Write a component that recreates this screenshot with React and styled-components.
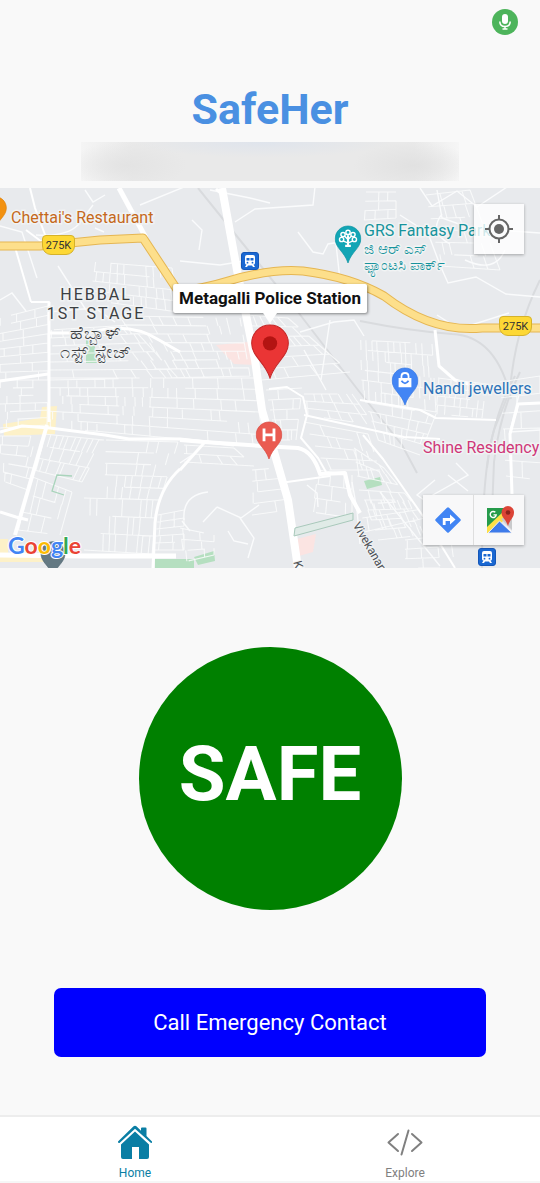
import React from "react";
import styled, { createGlobalStyle } from "styled-components";

const Global = createGlobalStyle`
  * { box-sizing: border-box; }
  html, body, #root { margin: 0; min-height: 100%; }
  body { background: #f9f9f9; font-family: Roboto, "Noto Sans", "Liberation Sans", sans-serif; }
  button { font-family: inherit; border: 0; padding: 0; cursor: pointer; }
`;

const Screen = styled.div`
  display: flex;
  flex-direction: column;
  min-height: 100vh;
`;

const StatusBar = styled.div`
  display: flex;
  justify-content: flex-end;
  padding: 9px 22px 0 0;
  height: 84px;
`;

const MicBadge = styled.span`
  display: flex;
  align-items: center;
  justify-content: center;
  width: 26px;
  height: 26px;
  border-radius: 50%;
  background: #4db45b;
`;

const Title = styled.h1`
  margin: 0;
  text-align: center;
  font-size: 43px;
  line-height: 50px;
  font-weight: 700;
  color: #4a90e2;
`;

const Redacted = styled.div`
  width: 70%;
  height: 39px;
  margin: 8px auto 7px;
  background:
    radial-gradient(ellipse 34% 40% at 48% 0, #dfe4ec, transparent),
    radial-gradient(ellipse 16% 60% at 88% 60%, #e1e1e1, transparent),
    radial-gradient(ellipse 16% 60% at 12% 60%, #e3e3e3, transparent),
    linear-gradient(90deg, #f5f5f5, #e9e9e9 14%, #e9e9e9 88%, #f6f6f6);
`;

/* The drawing, the places and the controls are layers in one grid cell. */
const MapArea = styled.section`
  display: grid;
  width: 100%;
  aspect-ratio: 540 / 380;
  overflow: hidden;
  background: #e8eaed;

  > * { grid-area: 1 / 1; }
`;

const MapDrawing = styled.svg`
  display: block;
  width: 100%;
  height: 100%;
`;

const Places = styled.div`
  position: relative;
`;

const Spot = styled.div`
  position: absolute;
  left: ${(p) => (p.$x / 540) * 100}%;
  top: ${(p) => ((p.$y - 188) / 380) * 100}%;
`;

const PlaceName = styled(Spot)`
  color: ${(p) => p.$color};
  font-size: 16px;
  line-height: 20px;
  white-space: nowrap;
  -webkit-text-stroke: 3px #f1f3f4;
  paint-order: stroke fill;
`;

const LocalName = styled.span`
  display: block;
  font-size: 15px;
  line-height: 16px;
`;

const District = styled(Spot)`
  width: 120px;
  text-align: center;
  color: #3c4043;
  font-size: 16px;
  line-height: 19px;
  letter-spacing: 2px;
  -webkit-text-stroke: 3px #f1f3f4;
  paint-order: stroke fill;
`;

const DistrictLocal = styled.span`
  display: block;
  font-size: 18px;
  letter-spacing: 1px;
`;

const RoadShield = styled(Spot)`
  width: 33px;
  height: 20px;
  border: 1px solid #d5b22a;
  border-radius: 4px 4px 9px 9px;
  background: #fdd835;
  color: #333;
  font-size: 11px;
  line-height: 19px;
  text-align: center;
`;

const RoadName = styled(Spot)`
  transform: rotate(${(p) => p.$turn}deg);
  transform-origin: 0 50%;
  color: #4d5156;
  font-size: 12px;
  line-height: 14px;
  white-space: nowrap;
  -webkit-text-stroke: 2px #f1f3f4;
  paint-order: stroke fill;
`;

const Callout = styled(Spot)`
  transform: translateX(-50%);
  padding: 0 6px;
  background: #fff;
  border-radius: 2px;
  box-shadow: 0 1px 3px rgba(0, 0, 0, 0.45);
  color: #111;
  font-size: 17px;
  font-weight: 700;
  line-height: 29px;
  white-space: nowrap;

  &::after {
    content: "";
    position: absolute;
    left: 50%;
    top: 100%;
    margin-left: -7px;
    border: 7px solid transparent;
    border-top: 10px solid #fff;
    border-bottom: 0;
  }
`;

const Controls = styled.div`
  display: flex;
  flex-direction: column;
  justify-content: space-between;
  padding: 16px 16px 7px 8px;
  z-index: 1;
`;

const MapButton = styled.button`
  display: flex;
  align-items: center;
  justify-content: center;
  width: 50px;
  height: 50px;
  background: ${(p) => (p.$solid ? "#f8f8f9" : "rgba(255, 255, 255, 0.8)")};
`;

const LocateButton = styled(MapButton)`
  align-self: flex-end;
  box-shadow: 0 1px 3px rgba(0, 0, 0, 0.3);
`;

const ControlRow = styled.div`
  display: flex;
  justify-content: space-between;
  align-items: flex-end;
`;

const MapTools = styled.div`
  display: flex;
  gap: 1px;
  margin-bottom: 16px;
  background: #dedede;
  box-shadow: 0 1px 3px rgba(0, 0, 0, 0.3);
`;

const GoogleMark = styled.div`
  font-family: Lato, sans-serif;
  font-size: 23px;
  font-weight: 700;
  line-height: 32px;
  -webkit-text-stroke: 2px #fff;
  paint-order: stroke fill;
`;

const Letter = styled.span`
  color: ${(p) => p.$color};
`;

const Actions = styled.main`
  flex: 1;
  display: flex;
  flex-direction: column;
  align-items: center;
  gap: 78px;
  padding: 79px 10% 58px;
`;

const SafeButton = styled.button`
  width: 263px;
  height: 263px;
  padding-bottom: 9px;
  border-radius: 50%;
  background: #008000;
  color: #fff;
  font-size: 76px;
  line-height: 88px;
  font-weight: 700;
`;

const CallButton = styled.button`
  width: 100%;
  height: 69px;
  border-radius: 7px;
  background: #0000ff;
  color: #fff;
  font-size: 22px;
  line-height: 28px;
`;

const TabBar = styled.nav`
  display: flex;
  height: 68px;
  background: #fff;
  border-top: 2px solid #ededed;
  border-bottom: 2px solid #f6f6f6;
`;

const Tab = styled.a`
  flex: 1;
  display: flex;
  flex-direction: column;
  align-items: center;
  gap: 6px;
  padding-top: 7px;
  color: ${(p) => (p.$active ? "#0a7ea4" : "#808080")};
  font-size: 12px;
  line-height: 14px;
  text-decoration: none;
`;

/* Street grid inside a quadrilateral: a, b, c, d run clockwise from top left. */
function grid(a, b, c, d, rows, cols, seed = 1) {
  const mix = (p, q, t) => [p[0] + (q[0] - p[0]) * t, p[1] + (q[1] - p[1]) * t];
  const at = (u, v) => mix(mix(a, b, u), mix(d, c, u), v).map((n) => n.toFixed(1)).join(" ");
  const rand = (n) => {
    const s = Math.sin(n * 12.9898 + seed * 78.233) * 43758.5453;
    return s - Math.floor(s);
  };
  let path = "";
  for (let i = 0; i <= rows; i++) {
    const start = rand(i) < 0.3 ? rand(i + 7) * 0.4 : 0;
    path += `M${at(start, i / rows)}L${at(rand(i + 3) < 0.3 ? 0.7 : 1, i / rows)}`;
  }
  for (let r = 0; r < rows; r++) {
    for (let k = 0; k <= cols; k++) {
      if (rand(r * 31 + k) < 0.62) {
        const u = Math.min(1, (k + rand(r * 5 + k) * 0.5) / cols);
        path += `M${at(u, r / rows)}L${at(u, (r + 1) / rows)}`;
      }
    }
  }
  return path;
}

const STREETS = [
  grid([95, 262], [172, 268], [178, 312], [90, 300], 4, 11, 1),
  grid([0, 318], [48, 306], [48, 380], [0, 380], 8, 3, 2),
  grid([50, 330], [130, 325], [178, 378], [50, 378], 6, 8, 3),
  grid([118, 316], [240, 318], [250, 376], [160, 378], 7, 9, 4),
  grid([0, 380], [48, 380], [47, 425], [0, 428], 6, 3, 5),
  grid([50, 380], [148, 378], [150, 436], [50, 427], 6, 11, 6),
  grid([150, 378], [254, 378], [264, 446], [148, 436], 6, 8, 7),
  grid([0, 436], [44, 436], [28, 490], [0, 480], 5, 3, 8),
  grid([44, 434], [104, 440], [82, 482], [34, 470], 3, 10, 9),
  grid([106, 440], [178, 442], [160, 500], [104, 498], 5, 7, 10),
  grid([84, 498], [158, 500], [152, 554], [84, 550], 3, 12, 11),
  grid([30, 476], [72, 492], [60, 535], [18, 530], 3, 6, 12),
  grid([158, 515], [184, 510], [184, 550], [154, 550], 5, 2, 14),
  grid([252, 470], [276, 468], [288, 510], [252, 515], 4, 2, 15),
  grid([246, 315], [288, 318], [350, 372], [262, 380], 6, 7, 16),
  grid([266, 390], [302, 388], [296, 440], [276, 440], 5, 4, 17),
  grid([304, 394], [352, 394], [374, 425], [304, 415], 3, 6, 18),
  grid([304, 422], [368, 434], [380, 470], [326, 470], 4, 5, 19),
  grid([360, 340], [432, 344], [436, 412], [362, 400], 6, 13, 20),
  grid([365, 402], [436, 414], [420, 455], [378, 440], 4, 8, 21),
  grid([438, 378], [486, 384], [482, 418], [436, 414], 4, 8, 22),
  grid([354, 448], [384, 468], [425, 518], [364, 532], 6, 5, 23),
  grid([364, 500], [408, 500], [424, 535], [378, 540], 4, 8, 24),
  grid([405, 540], [450, 535], [455, 568], [405, 568], 3, 3, 25),
  grid([318, 470], [352, 475], [352, 518], [312, 512], 3, 3, 26),
  grid([366, 192], [396, 192], [396, 218], [364, 220], 3, 3, 27),
  grid([426, 195], [470, 190], [500, 270], [440, 266], 6, 4, 28),
  grid([500, 382], [540, 376], [540, 480], [506, 476], 6, 1, 29),
  grid([180, 528], [214, 535], [214, 555], [184, 562], 3, 2, 30),
  grid([184, 445], [234, 448], [254, 466], [184, 462], 2, 4, 31),
].join("");

const HIGHWAY = "M0 246l40 0 60-6 43-2 35 53q24-2 50-10 45-13 75-10 48 6 81 25 48 37 98 32h60l38-10";

function MapBackground() {
  return (
    <MapDrawing viewBox="0 188 540 380" preserveAspectRatio="xMidYMid slice" aria-hidden="true">
      <g fill="#fbe4e2">
        <path d="M216 345l32-3 7 23-21-1z" />
        <path d="M297 539l19-5-3 18-14 4z" />
      </g>
      <g fill="#fdf1c8">
        <path d="M3 424l37-6 2-11 15-1-2 28-51 2z" />
        <path d="M0 553h44v9H0zM0 539h8v14H0z" />
      </g>
      <g fill="#b5dfc0">
        <path d="M86 339h8l3 24H86zM364 481l16-4 2 8-15 4zM155 559h39v9h-39zM194 557l20-6 1 10-17 4z" />
      </g>
      <g fill="none" stroke="#d9dbde" strokeWidth="2">
        <path d="M198 188l50 62 50 62 60 78 44 55 15 28" />
        <path d="M360 321q50 10 92 13 45 2 59 65M540 280q-25 50-30 110l-16 40q-12 40-12 138" />
        <path d="M520 372q-20 40-26 90l-2 50M515 376q-22 40-28 92" />
      </g>
      <path d={STREETS} fill="none" stroke="#fafbfc" strokeWidth="1.1" opacity="0.85" />
      <g fill="none" stroke="#fafbfc" strokeWidth="1.4">
        <path d="M0 226l22 6 15 46M58 266l28 44M36 235q30 2 42-10l15-20M85 190l8 12 12-7M95 228l9 4M140 205l44-18M0 300l12-7 14 18M48 312l47-4 20 14" />
        <path d="M192 220l10 10-3 20M210 190l40 8 20 5M235 222l20-13 58-4 2-18M298 232l15 20 10 2 5-10 30-5M335 235l5 45M180 261l40 4 30-5" />
        <path d="M437 190l5 28 28 10 70 5M400 215l28 18 12 32 8 18 28-6 30 17 34 3M420 188l12 18 25-15 20 16 30-20M450 244q-22-12-8-30M465 260q30 14 40-10" />
        <path d="M437 315l22 14 50-16M304 350l22 40M300 332l34-10 20-2 10 16M330 320l-9 60M520 390l-10 42 30-2M435 480l-18 15 7 5 44-25-12-12M448 475l20 16" />
        <path d="M180 463l12-8M184 520q-2-25 24-28M182 521l8 10M217 507l24 11 18-13M217 507l-14 15M240 518l14 20-6 20M228 531l6 10 14 3" />
        <path d="M307 485l10 8 1 14M352 482l5 28 3 34M380 492l60 74" />
      </g>
      <g fill="none" stroke="#fff" strokeLinejoin="round">
        <path d="M30 188l5 20 15 40-24-18M15 247l16 55M31 302h18v73" strokeWidth="2" />
        <path d="M49 302v120" strokeWidth="3" />
        <path d="M0 432l22-6 28 2 55 7 24 4h51l54 6" strokeWidth="3" />
        <path d="M47 425l-32 110" strokeWidth="4" />
        <path d="M0 512l16 5 12 3M49 333h40q40-12 70 7l21 12M0 381l48-7" strokeWidth="3" />
        <path d="M119 188l27 50" strokeWidth="5" />
        <path d="M0 555l86 1h90" strokeWidth="5" />
        <path d="M180 469q-22 20-25 54l-2 45M180 470l24-27" strokeWidth="3" />
        <path d="M222 188l15 82 18 90 7 50 26 90 10 68" strokeWidth="8" />
        <path d="M216 189l10 9" strokeWidth="3" />
        <path d="M180 440l24 2 58 4 36 2q15 3 22 26l25-1 5 22 10 18" strokeWidth="4" />
        <path d="M280 483l50-7M326 472l-8-14-17-20 6-23-4-18-16-10-18 2" strokeWidth="2" />
        <path d="M304 415l100 22 36 2M360 400l60 10 16 8 60 2M363 435l20 24 42 60 30 49" strokeWidth="2" />
        <path d="M435 330l4 36 16 14 20 6" strokeWidth="3" />
        <path d="M540 403l-22 1-8 30 2 60" strokeWidth="3" />
      </g>
      <path d="M295 528l58-15v7l-59 16z" fill="#e0ebe7" stroke="#a9c9bb" />
      <path d="M72 476l-15-1-5 16 12 4" fill="none" stroke="#a9d4bb" strokeWidth="1.3" />
      <g fill="none" strokeLinejoin="round">
        <path d={HIGHWAY} stroke="#e5b653" strokeWidth="9" />
        <path d={HIGHWAY} stroke="#fddf8b" strokeWidth="7" />
      </g>
    </MapDrawing>
  );
}

const PinShape = styled.svg`
  display: block;
  transform: translate(-50%, -100%);
`;

function Pin({ x, y, width, height, color, edge, children }) {
  return (
    <Spot $x={x} $y={y}>
      <PinShape width={width} height={height} viewBox="0 0 38 54" aria-hidden="true">
        <path d="M19 1C9 1 1 9 1 19c0 13 13 18 18 34 5-16 18-21 18-34C37 9 29 1 19 1z" fill={color} stroke={edge} />
        {children}
      </PinShape>
    </Spot>
  );
}

const Station = ({ x, y }) => (
  <Spot $x={x} $y={y}>
    <svg width="18" height="18" viewBox="0 0 18 18" aria-hidden="true">
      <rect x="0.5" y="0.5" width="17" height="17" rx="2.5" fill="#1a68d2" stroke="#1456b8" />
      <path d="M6 3h6q2 0 2 2v6q0 1.500-1.500 1.500L14 15h-2l-1-1.500H7L6 15H4l1.500-2.500Q4 12.500 4 11V5q0-2 2-2z" fill="#fff" />
      <path d="M5.500 6H8.500v2.500h-3zM9.500 6h3v2.500h-3z" fill="#1a68d2" />
      <circle cx="6.500" cy="10.700" r="0.900" fill="#1a68d2" />
      <circle cx="11.500" cy="10.700" r="0.900" fill="#1a68d2" />
    </svg>
  </Spot>
);

const GOOGLE = [["G", "#4285f4"], ["o", "#ea4335"], ["o", "#fbbc04"], ["g", "#4285f4"], ["l", "#34a853"], ["e", "#ea4335"]];

function MapPlaces() {
  return (
    <Places>
      <Pin x={-5} y={230} width={26} height={34} color="#f29111" edge="#dd7c00" />
      <PlaceName $x={11} $y={208} $color="#c5691c">Chettai's Restaurant</PlaceName>
      <RoadShield $x={42} $y={235}>275K</RoadShield>
      <RoadShield $x={499} $y={316}>275K</RoadShield>
      <District $x={36} $y={285}>
        HEBBAL<br />1ST STAGE
        <DistrictLocal>ಹೆಬ್ಬಾಳ್</DistrictLocal>
        <DistrictLocal>೧ಸ್ಟ್ ಸ್ಟೇಜ್</DistrictLocal>
      </District>
      <Station x={241} y={252} />
      <Station x={478} y={548} />
      <Pin x={348} y={264} width={27} height={39} color="#12a5b5" edge="#0c93a2">
        <g fill="none" stroke="#fff" strokeWidth="2">
          <circle cx="19" cy="10" r="3" />
          <circle cx="12" cy="13" r="3" />
          <circle cx="26" cy="13" r="3" />
          <circle cx="10" cy="20" r="3" />
          <circle cx="28" cy="20" r="3" />
          <path d="M12 22l7 3 7-3M14 15l5 5 5-5" />
          <path d="M19 14v15M15 29h8" strokeWidth="3" />
        </g>
      </Pin>
      <PlaceName $x={364} $y={221} $color="#17939c">
        GRS Fantasy Park
        <LocalName>ಜಿ ಆರ್ ಎಸ್</LocalName>
        <LocalName>ಫ್ಯಾಂಟಸಿ ಪಾರ್ಕ್</LocalName>
      </PlaceName>
      <Pin x={405} y={406} width={27} height={39} color="#4285f4" edge="#3577e4">
        <path d="M10 15h18v13H10z" fill="#fff" />
        <path d="M14 16v-3q0-5 5-5t5 5v3" fill="none" stroke="#fff" strokeWidth="2.500" />
        <path d="M14 19q5 7 10 0" fill="none" stroke="#4285f4" strokeWidth="2.500" />
      </Pin>
      <PlaceName $x={423} $y={379} $color="#2d73b9">Nandi jewellers</PlaceName>
      <PlaceName $x={423} $y={438} $color="#cf3779">Shine Residency</PlaceName>
      <Pin x={269} y={460} width={27} height={39} color="#ea5b51" edge="#d94a41">
        <path d="M12 10v18M26 10v18M12 19h14" fill="none" stroke="#fff" strokeWidth="4" />
      </Pin>
      <Pin x={270} y={379} width={39} height={55} color="#ea3535" edge="#c52828">
        <circle cx="19" cy="19" r="7" fill="#b31412" />
      </Pin>
      <Callout $x={270} $y={284}>Metagalli Police Station</Callout>
      <Pin x={53} y={577} width={27} height={36} color="#647983" edge="#566b75" />
      <RoadName $x={356} $y={516} $turn={60}>Vivekanan</RoadName>
      <RoadName $x={297} $y={554} $turn={75}>K</RoadName>
    </Places>
  );
}

function MapControls() {
  return (
    <Controls>
      <LocateButton aria-label="My location">
        <svg width="28" height="28" viewBox="0 0 28 28">
          <circle cx="14" cy="14" r="9.500" fill="none" stroke="#666" strokeWidth="2" />
          <circle cx="14" cy="14" r="5" fill="#666" />
          <path d="M14 0v5M14 23v5M0 14h5M23 14h5" stroke="#666" strokeWidth="2" />
        </svg>
      </LocateButton>
      <ControlRow>
        <GoogleMark>
          {GOOGLE.map(([letter, color], i) => (
            <Letter key={i} $color={color}>{letter}</Letter>
          ))}
        </GoogleMark>
        <MapTools>
          <MapButton $solid aria-label="Directions">
            <svg width="26" height="26" viewBox="0 0 26 26">
              <path d="M12 .7q1-1 2 0L25.300 12q1 1 0 2L14 25.300q-1 1-2 0L.7 14q-1-1 0-2z" fill="#4285f4" />
              <path d="M9.200 18v-5.500h7" fill="none" stroke="#fff" strokeWidth="2.800" />
              <path d="M15 7.500l5.500 5-5.500 5z" fill="#fff" />
            </svg>
          </MapButton>
          <MapButton $solid aria-label="Open in Google Maps">
            <svg width="30" height="30" viewBox="0 0 30 30">
              <path d="M3 3h20L3 26z" fill="#259b4b" />
              <path d="M3 25L24 4l4 4v18L15 15 3 28z" fill="#e3e3e5" />
              <path d="M3 22L20 6l4 5L7 28H3z" fill="#fde047" />
              <path d="M15.500 16L28 28H4z" fill="#3e7bea" stroke="#f1f1f3" />
              <path d="M17 14l11 11V13l-3-3z" fill="#c9cacc" />
              <path d="M24 1a6.500 6.500 0 0 0-6.500 6.500C17.500 13 22 14 24 21c2-7 6-8 6-13.500A6.200 6.200 0 0 0 24 1z" fill="#db4437" />
              <circle cx="24" cy="7.500" r="2.300" fill="#8c231b" />
              <path d="M11.300 7.300a3 3 0 1 0 .9 2.600H9.500" fill="none" stroke="#fff" strokeWidth="1.400" />
            </svg>
          </MapButton>
        </MapTools>
      </ControlRow>
    </Controls>
  );
}

export default function App() {
  return (
    <Screen>
      <Global />
      <StatusBar>
        <MicBadge role="img" aria-label="Microphone in use">
          <svg width="14" height="18" viewBox="0 0 14 18">
            <rect x="4" y="1" width="6" height="10" rx="3" fill="#fff" />
            <path d="M1.800 8.500q0 5 5.200 5t5.200-5M7 13.500V16M4.500 16h5" fill="none" stroke="#fff" strokeWidth="1.500" />
          </svg>
        </MicBadge>
      </StatusBar>
      <Title>SafeHer</Title>
      <Redacted />

      <MapArea aria-label="Map">
        <MapBackground />
        <MapPlaces />
        <MapControls />
      </MapArea>

      <Actions>
        <SafeButton>SAFE</SafeButton>
        <CallButton>Call Emergency Contact</CallButton>
      </Actions>

      <TabBar>
        <Tab href="#home" $active aria-current="page">
          <svg width="36" height="36" viewBox="0 0 36 36" fill="currentColor" aria-hidden="true">
            <path d="M1 17.500L16.300 2.600q1.700-1.500 3.400 0L24 6.800V4.500q0-1 1-1h3.500q1 0 1 1V12l5.500 5.500q.5 1.500-1 1.600L18 4.700 2.500 19q-1.800.2-1.500-1.500z" />
            <path d="M18 7.500L32 20.500V33q0 2-2 2h-8V23h-7v12H6q-2 0-2-2V20.500z" />
          </svg>
          Home
        </Tab>
        <Tab href="#explore">
          <svg width="36" height="36" viewBox="0 0 36 36" fill="none" stroke="currentColor" strokeWidth="2" strokeLinecap="round" strokeLinejoin="round" aria-hidden="true">
            <path d="M11 10L1.500 18.500 11 27M25 10l9.500 8.500L25 27M21.500 6.500l-7 24" />
          </svg>
          Explore
        </Tab>
      </TabBar>
    </Screen>
  );
}
